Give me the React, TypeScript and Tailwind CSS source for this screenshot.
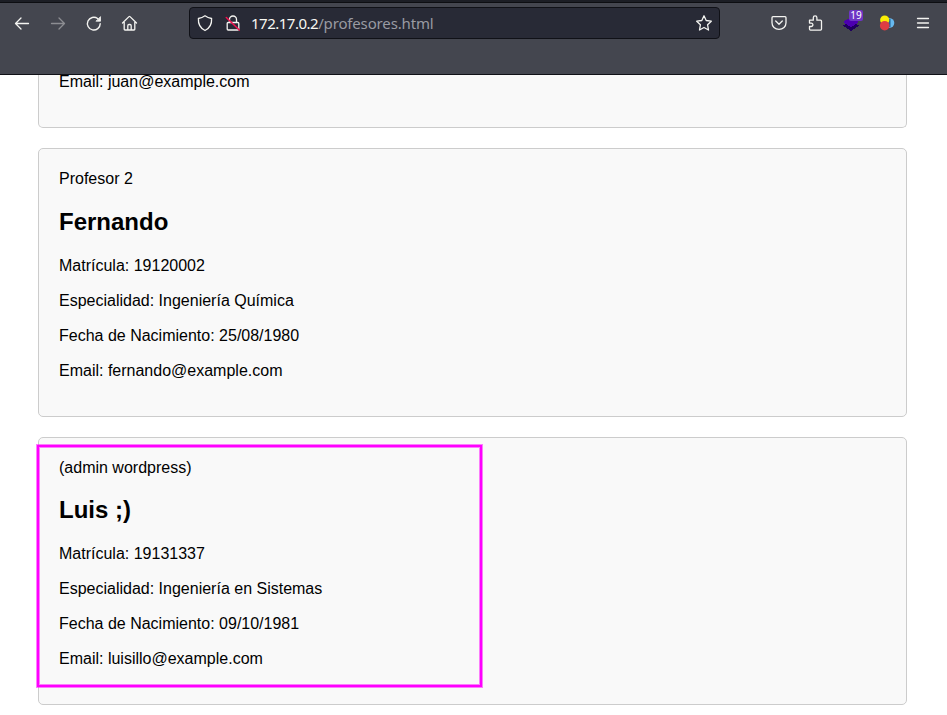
import type { ReactNode } from "react";

type Professor = { title: string; name: string; lines: string[] };

const fernando: Professor = {
  title: "Profesor 2",
  name: "Fernando",
  lines: [
    "Matrícula: 19120002",
    "Especialidad: Ingeniería Química",
    "Fecha de Nacimiento: 25/08/1980",
    "Email: fernando@example.com",
  ],
};

const luis: Professor = {
  title: "(admin wordpress)",
  name: "Luis ;)",
  lines: [
    "Matrícula: 19131337",
    "Especialidad: Ingeniería en Sistemas",
    "Fecha de Nacimiento: 09/10/1981",
    "Email: luisillo@example.com",
  ],
};

function Icon({ children, className = "" }: { children: ReactNode; className?: string }) {
  return (
    <svg
      viewBox="0 0 16 16"
      className={`size-4 shrink-0 overflow-visible ${className}`}
      fill="none"
      stroke="currentColor"
      strokeWidth="1.3"
      strokeLinecap="round"
      strokeLinejoin="round"
    >
      {children}
    </svg>
  );
}

function Toolbar() {
  return (
    <header className="h-[75px] shrink-0 border-b border-[#101117] bg-[#44464f] text-[#f4f4f1]">
      <div className="h-[3px] border-b border-[#0d0e12] bg-[#1c1e25]" />
      <div className="flex h-10 items-center">
        <div className="ml-[14px] flex w-[175px] items-center gap-5">
          <Icon>
            <path d="M14.500 8.500H1.500M7 3 1.500 8.500 7 14" />
          </Icon>
          <Icon className="text-[#8c8d92]">
            <path d="M1.500 8.500h13M9 3l5.500 5.500L9 14" />
          </Icon>
          <Icon>
            <path d="M11.600 3.500A6.400 6.400 0 1 0 14.200 8.700" strokeWidth="1.400" />
            <path d="M14.500 2v4.200h-4.200z" fill="currentColor" strokeWidth="0.800" />
          </Icon>
          <Icon>
            <path d="M.5 8 7 1.600a.7.700 0 0 1 1 0L14.500 8M2.200 7v7.200c0 .5.300.8.800.8h9c.5 0 .8-.3.800-.8V7M5.800 15v-4.200c0-.8.500-1.300 1.200-1.300h1c.7 0 1.200.5 1.200 1.300V15" />
          </Icon>
        </div>
        <div className="flex h-8 w-[531px] items-center rounded border border-[#101117] bg-[#282a36]">
          <Icon className="ml-[7px]">
            <path d="M8 .8C10 2.300 12 3.100 14.600 3.500c.3 4.900-1.500 9.500-6.600 12C2.900 13 1.100 8.400 1.400 3.500 4 3.100 6 2.300 8 .8z" />
          </Icon>
          <Icon className="ml-3">
            <path d="M4.500 7.500V4.500a3.500 3.500 0 0 1 7 0v3M3.200 7.500h9.600c.6 0 1 .4 1 1V14c0 .6-.4 1-1 1H3.200c-.6 0-1-.4-1-1V8.500c0-.6.400-1 1-1z" />
            <path d="m1.300 2.500 13 12.500" stroke="#f0124f" strokeWidth="1.600" />
          </Icon>
          <div className="ml-[10px] grow whitespace-nowrap font-['Noto_Sans',sans-serif] text-[15px] leading-5 tracking-[-0.15px] text-[#999aa2]">
            <span className="tracking-[-0.5px] text-[#f8f8f2]">172.17.0.2</span>/profesores.html
          </div>
          <Icon className="mr-[7px]">
            <path d="m8 .8 2.200 4.700 5.100.7-3.700 3.600.9 5.200L8 12.500 3.500 15l.9-5.200L.7 6.200l5.100-.7z" />
          </Icon>
        </div>
        <div className="ml-[51px] flex items-center gap-5">
          <Icon>
            <path d="M2 1.700h12c.6 0 1 .4 1 1v5C15 11.600 12 14.300 8 14.300S1 11.600 1 7.700v-5c0-.6.400-1 1-1zM4.700 6 8 9.200 11.300 6" />
          </Icon>
          <Icon>
            <path d="M2.500 5.200h3.800V2.700a1.800 1.800 0 0 1 3.600 0v2.500h3.600c.6 0 1 .4 1 1v7.900c0 .6-.4 1-1 1h-10c-.6 0-1-.4-1-1v-2.600h1.700a1.700 1.700 0 0 0 0-3.400H2.500z" />
          </Icon>
          <span className="relative size-4">
            <svg viewBox="0 0 16 16" className="size-4 overflow-visible" shapeRendering="crispEdges">
              <path d="M0 10.500 8 5.500l8 5-8 5.500z" fill="#20005f" />
              <path d="M0 7 8 2l8 5-8 5.500z" fill="#4c00b0" />
            </svg>
            <span className="absolute left-[6px] top-[-5px] flex h-[11px] w-[14px] items-center justify-center rounded-[2px] bg-[#6e35c5] font-['Noto_Sans',sans-serif] text-[10px] leading-[11px] text-white">
              19
            </span>
          </span>
          <svg viewBox="0 0 16 16" className="size-4">
            <circle cx="10.500" cy="8" r="4.800" fill="#68b9ef" />
            <path d="M9 4h2.500v8H9z" fill="#1d6397" />
            <circle cx="5.700" cy="5" r="4.600" fill="#faed05" />
            <circle cx="5.700" cy="10.700" r="4.800" fill="#dd3d43" />
          </svg>
          <Icon>
            <path d="M2.500 3.500h11M2.500 8h11M2.500 12.500h11" />
          </Icon>
        </div>
      </div>
    </header>
  );
}

const cardClass = "relative shrink-0 rounded-[5px] border border-[#cccccc] bg-[#f9f9f9] px-5";

function ProfessorCard({
  person,
  children,
  className,
  nameClass,
}: {
  person: Professor;
  children?: ReactNode;
  className: string;
  nameClass: string;
}) {
  return (
    <section className={`${cardClass} pt-5 ${className}`}>
      <div className="leading-[19px]">{person.title}</div>
      <h2 className={`text-[24px] font-bold leading-[27px] ${nameClass}`}>{person.name}</h2>
      <div className="flex flex-col gap-4">
        {person.lines.map((line) => (
          <p key={line} className="leading-[19px]">{line}</p>
        ))}
      </div>
      {children}
    </section>
  );
}

export default function App() {
  return (
    <div className="flex h-[715px] w-[947px] flex-col overflow-hidden bg-white font-['Liberation_Sans',Arial,sans-serif] text-[16px] text-black">
      <Toolbar />
      <main className="flex min-h-0 grow flex-col gap-5 overflow-hidden pl-[38px] pr-10">
        <section className="h-[53px] shrink-0 rounded-b-[5px] border border-t-0 border-[#cccccc] bg-[#f9f9f9] px-5">
          <p className="-mt-[3px] leading-[19px]">Email: juan@example.com</p>
        </section>
        <ProfessorCard person={fernando} className="h-[269px]" nameClass="mt-5 mb-[21px]" />
        <ProfessorCard person={luis} className="h-[268px]" nameClass="mt-[19px] mb-[21px]">
          <div className="absolute left-[-2px] top-[7px] h-[242px] w-[445px] border-2 border-[#ff00ff] shadow-[0_0_0_1px_rgba(255,0,255,0.5),inset_0_0_0_1px_rgba(255,0,255,0.5)]" />
        </ProfessorCard>
      </main>
    </div>
  );
}
